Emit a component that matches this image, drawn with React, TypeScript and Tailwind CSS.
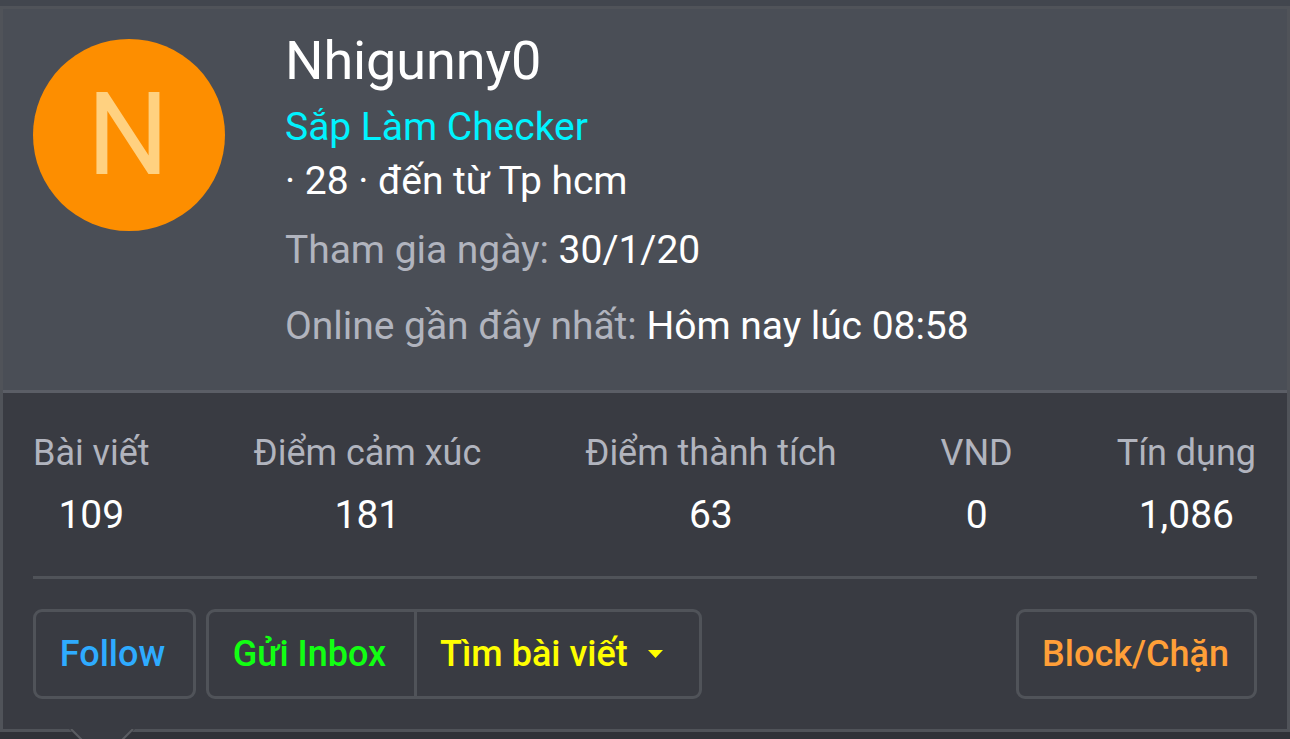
const stats = [
  { label: "Bài viết", value: "109" },
  { label: "Điểm cảm xúc", value: "181" },
  { label: "Điểm thành tích", value: "63" },
  { label: "VND", value: "0" },
  { label: "Tín dụng", value: "1,086" },
];

const buttonText = "text-[36px] leading-[54px] font-medium whitespace-nowrap";

function Pointer() {
  return (
    <svg className="absolute left-[69px] top-[729px]" width="66" height="10" viewBox="0 0 66 10">
      <path d="M0 0 L12 12 H54 L66 0 Z" fill="#393b42" />
      <path d="M2 0 L14 12 M64 0 L52 12" stroke="#5b5d62" strokeWidth="2" fill="none" />
    </svg>
  );
}

function Header() {
  return (
    <div className="flex h-[384px] border-b-3 border-[#5b5e66] bg-[#4a4e56] pl-[30px]">
      <div className="mt-[30px] flex size-[192px] shrink-0 items-center justify-center rounded-full bg-[#fd8e00] pr-[2px] text-[115px] leading-[192px] text-[#ffd180]">
        N
      </div>
      <div className="ml-[60px] mt-[22px] text-[39px] leading-[54px] tracking-[-0.03px] text-white">
        <h1 className="text-[54px] leading-[60px] tracking-[-0.1px]">Nhigunny0</h1>
        <div className="mt-[9px] text-[#00f3ff]">Sắp Làm Checker</div>
        <div>· 28 · đến từ Tp hcm</div>
        <div className="mt-[15px]">
          <span className="text-[#b1b4be]">Tham gia ngày:</span> 30/1/20
        </div>
        <div className="mt-[22px]">
          <span className="text-[#b1b4be]">Online gần đây nhất:</span> Hôm nay lúc 08:58
        </div>
      </div>
    </div>
  );
}

function Stats() {
  return (
    <dl className="flex justify-between pt-[33px] pr-px text-center">
      {stats.map((s) => (
        <div key={s.label}>
          <dt className="text-[36px] leading-[54px] tracking-[-0.03px] text-[#b1b4be]">{s.label}</dt>
          <dd className="mt-2 text-[39px] leading-[54px] text-white">{s.value}</dd>
        </div>
      ))}
    </dl>
  );
}

function Actions() {
  return (
    <div className="flex h-[90px] justify-between">
      <div className="flex gap-[10px]">
        <button className={`${buttonText} w-[163px] rounded-[9px] border-3 border-[#505359] pr-1 text-[#2eabff]`}>
          Follow
        </button>
        <div className="flex w-[496px] rounded-[9px] border-3 border-[#505359]">
          <button className={`${buttonText} w-[208px] border-r-3 border-[#505359] pr-1 text-[#12ff12]`}>
            Gửi Inbox
          </button>
          <button className={`${buttonText} flex items-center pl-[23px] text-[#ffff00]`}>
            Tìm bài viết
            <svg className="ml-5" width="15" height="8" viewBox="0 0 15 8" fill="currentColor">
              <path d="M0 0 H15 L7.5 8 Z" />
            </svg>
          </button>
        </div>
      </div>
      <button className={`${buttonText} w-[241px] rounded-[9px] border-3 border-[#505359] pr-[2px] text-[#ff9f38]`}>
        Block/Chặn
      </button>
    </div>
  );
}

export default function App() {
  return (
    <div className="relative h-[739px] w-[1290px] overflow-hidden bg-linear-to-b from-[#42464e] from-50% to-[#303238] to-50% pt-[6px] font-['Roboto',sans-serif]">
      <div className="h-[726px] border-3 border-[#505359] bg-[#393b42]">
        <Header />
        <div className="px-[30px]">
          <Stats />
          <hr className="mb-[30px] mt-[34px] border-t-3 border-[#505359]" />
          <Actions />
        </div>
      </div>
      <Pointer />
    </div>
  );
}
